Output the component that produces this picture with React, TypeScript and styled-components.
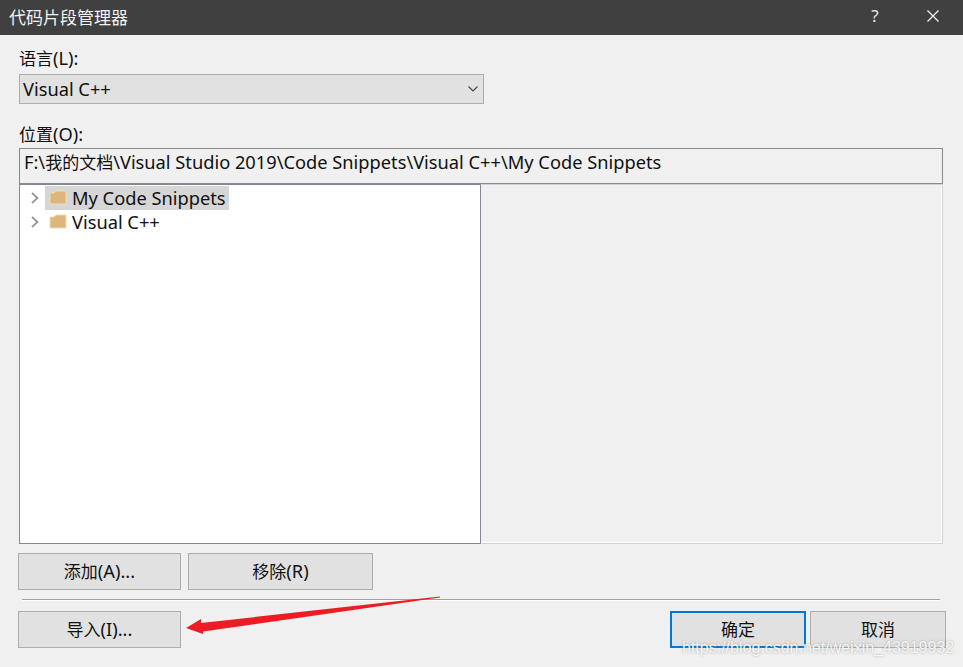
import styled, { createGlobalStyle } from 'styled-components'

const GlobalStyle = createGlobalStyle`
  html, body {
    margin: 0;
    padding: 0;
    background: #f0f0f0;
  }
  * {
    box-sizing: border-box;
  }
`

const Dialog = styled.div`
  position: relative;
  width: 963px;
  height: 667px;
  overflow: hidden;
  background: #f0f0f0;
  color: #111;
  font-family: "Noto Sans", "Noto Sans CJK SC", sans-serif;
  font-size: 18.25px;
`

const Cjk = styled.span`
  font-size: 17px;
`

const TitleBar = styled.div`
  height: 35px;
  display: flex;
  align-items: center;
  padding: 0 0 3px 9px;
  background: #404040;
  color: #f2f2f2;
  font-size: 17px;
`

const TitleText = styled.div`
  flex: 1;
`

const HelpGlyph = styled.div`
  width: 14px;
  margin-right: 45px;
  padding-bottom: 2px;
  text-align: center;
  font-size: 17px;
  color: #e8e8e8;
`

const CloseIcon = styled.svg`
  width: 12px;
  height: 12px;
  margin-right: 24px;
`

const Body = styled.div`
  padding: 11px 20px 0 19px;
  display: flex;
  flex-direction: column;
`

const FieldLabel = styled.div`
  height: 28px;
  line-height: 24px;
`

const Select = styled.div`
  width: 465px;
  height: 30px;
  display: flex;
  align-items: center;
  justify-content: space-between;
  padding: 0 5px 2px 3px;
  background: #e1e1e1;
  border: 1px solid #adadad;
  margin-bottom: 18px;
`

const Chevron = styled.svg`
  width: 10px;
  height: 6px;
  margin-top: 2px;
`

const PathBox = styled.div`
  height: 36px;
  margin-top: -2px;
  display: flex;
  align-items: center;
  padding: 0 4px 10px;
  border: 1px solid #8a8a8a;
  white-space: pre;
`

const Panes = styled.div`
  height: 360px;
  display: flex;
`

const TreePane = styled.div`
  width: 462px;
  background: #fff;
  border: 1px solid #828790;
  padding: 1px 0 0 10px;
`

const DetailPane = styled.div`
  flex: 1;
  margin-left: 1px;
  background: #f0f0f0;
  border: 1px solid #d0d0d0;
  border-left: none;
  box-shadow: inset -1px -1px 0 #fff;
`

const TreeRow = styled.div`
  height: 24px;
  display: flex;
  align-items: center;
`

const Expander = styled.svg`
  width: 10px;
  height: 14px;
  margin-right: 5px;
  margin-top: -1px;
`

const TreeItem = styled.div<{ $selected?: boolean }>`
  height: 24px;
  display: flex;
  align-items: center;
  gap: 5px;
  padding: 0 3px 2px 4px;
  background: ${p => (p.$selected ? '#d6d6d6' : 'transparent')};
`

const FolderIcon = styled.svg`
  width: 18px;
  height: 15px;
`

const ButtonRow = styled.div`
  margin: 9px 0 0 -1px;
  display: flex;
  gap: 7px;
`

const Separator = styled.div`
  height: 2px;
  margin: 9px 3px 10px 3px;
  background: #a0a0a0;
  border-bottom: 1px solid #fff;
`

const FooterRow = styled.div`
  display: flex;
  margin: 0 -3px 0 -1px;
  gap: 4px;
`

const Spacer = styled.div`
  flex: 1;
`

const Button = styled.div<{ $width: number; $primary?: boolean }>`
  width: ${p => p.$width}px;
  height: 37px;
  display: flex;
  align-items: center;
  justify-content: center;
  padding-bottom: 3px;
  background: #e1e1e1;
  border: ${p => (p.$primary ? '2px solid #0078d7' : '1px solid #adadad')};
  white-space: pre;
`

const Arrow = styled.svg`
  position: absolute;
  left: 180px;
  top: 590px;
  width: 270px;
  height: 50px;
`

const Watermark = styled.div`
  position: absolute;
  left: 682px;
  top: 639px;
  font-family: "Liberation Sans", sans-serif;
  font-size: 16px;
  color: rgba(255, 255, 255, 0.9);
  text-shadow: 0 0 2px rgba(120, 120, 120, 0.7);
  white-space: nowrap;
`

function Folder() {
  return (
    <FolderIcon viewBox="0 0 18 15">
      <path d="M1 3 L5 3 L7 1 L17 1 L17 14 L1 14 Z" fill="#dcb67a" stroke="#eedcbc" strokeWidth="1" />
    </FolderIcon>
  )
}

function Caret() {
  return (
    <Expander viewBox="0 0 10 14">
      <path d="M2 2 L7.5 7 L2 12" fill="none" stroke="#999" strokeWidth="1.8" />
    </Expander>
  )
}

export default function App() {
  return (
    <Dialog>
      <GlobalStyle />
      <TitleBar>
        <TitleText>代码片段管理器</TitleText>
        <HelpGlyph>?</HelpGlyph>
        <CloseIcon viewBox="0 0 12 12">
          <path d="M0.5 0.5 L11.5 11.5 M11.5 0.5 L0.5 11.5" stroke="#f2f2f2" strokeWidth="1.2" />
        </CloseIcon>
      </TitleBar>
      <Body>
        <FieldLabel><Cjk>语言</Cjk>(L):</FieldLabel>
        <Select>
          Visual C++
          <Chevron viewBox="0 0 10 6">
            <path d="M0.5 0.5 L5 5 L9.5 0.5" fill="none" stroke="#444" strokeWidth="1.1" />
          </Chevron>
        </Select>
        <FieldLabel><Cjk>位置</Cjk>(O):</FieldLabel>
        <PathBox>F:\<Cjk>我的文档</Cjk>\Visual Studio 2019\Code Snippets\Visual C++\My Code Snippets</PathBox>
        <Panes>
          <TreePane>
            <TreeRow>
              <Caret />
              <TreeItem $selected>
                <Folder />
                My Code Snippets
              </TreeItem>
            </TreeRow>
            <TreeRow>
              <Caret />
              <TreeItem>
                <Folder />
                Visual C++
              </TreeItem>
            </TreeRow>
          </TreePane>
          <DetailPane />
        </Panes>
        <ButtonRow>
          <Button $width={163}><Cjk>添加</Cjk>(A)...</Button>
          <Button $width={185}><Cjk>移除</Cjk>(R)</Button>
        </ButtonRow>
        <Separator />
        <FooterRow>
          <Button $width={163}><Cjk>导入</Cjk>(I)...</Button>
          <Spacer />
          <Button $width={136} $primary><Cjk>确定</Cjk></Button>
          <Button $width={136}><Cjk>取消</Cjk></Button>
        </FooterRow>
      </Body>
      <Arrow viewBox="0 0 270 50">
        <path d="M260 6.5 L21 33 L21 29 L6 38 L23 44 L23 41.5 L260 7.5 Z" fill="#ed1c24" />
      </Arrow>
      <Watermark>https://blog.csdn.net/weixin_43919932</Watermark>
    </Dialog>
  )
}
